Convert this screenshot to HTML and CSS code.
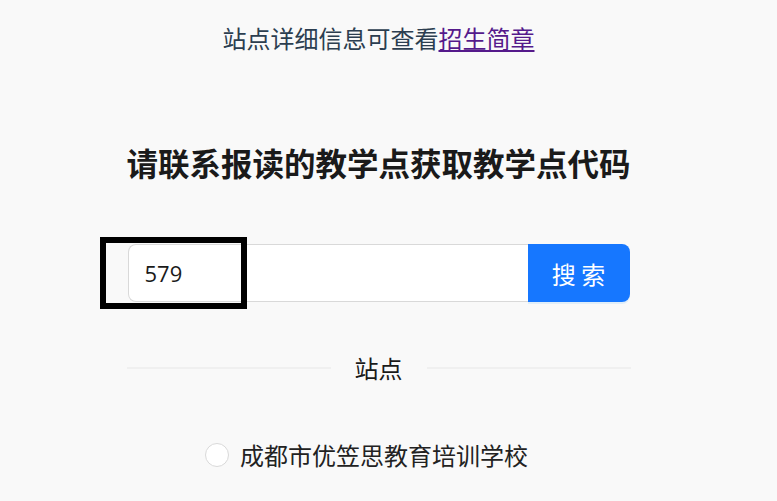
FILE: index.html
```html
<!DOCTYPE html>
<html lang="zh-CN">
<head>
<meta charset="utf-8">
<title>查询教学点</title>
<link rel="stylesheet" href="styles.css">
</head>
<body>
<div class="page">
  <p class="notice">站点详细信息可查看<a class="link" href="#">招生简章</a></p>
  <h1 class="title">请联系报读的教学点获取教学点代码</h1>
  <div class="search">
    <input class="search-input" type="text" value="579">
    <button class="search-btn">搜 索</button>
    <div class="mark"></div>
  </div>
  <div class="divider"><span class="divider-line"></span><span class="divider-text">站点</span><span class="divider-line"></span></div>
  <label class="radio"><span class="radio-circle"></span><span class="radio-text">成都市优笠思教育培训学校</span></label>
</div>
</body>
</html>
```
FILE: styles.css
```css
html, body {
  margin: 0;
  padding: 0;
  background: #f9f9f9;
  font-family: "Noto Sans CJK SC", "Noto Sans", sans-serif;
}
.page {
  width: 757px;
  display: flex;
  flex-direction: column;
  align-items: center;
}
.notice {
  margin: 20px 0 0;
  font-size: 24px;
  line-height: 36px;
  height: 36px;
  color: #2c3e50;
}
.link {
  color: #551a8b;
  text-decoration: underline;
}
.title {
  margin: 82px 0 0;
  font-size: 31.5px;
  line-height: 48px;
  height: 48px;
  font-weight: 700;
  color: #1a1a1a;
}
.search {
  margin-top: 58px;
  width: 502px;
  height: 58px;
  display: flex;
  position: relative;
}
.search-input {
  flex: 1;
  min-width: 0;
  box-sizing: border-box;
  height: 58px;
  border: 1px solid #d9d9d9;
  border-right: none;
  border-radius: 8px 0 0 8px;
  background: #fff;
  padding: 0 0 0 16px;
  font-family: "Open Sans", "Noto Sans", sans-serif;
  font-size: 22px;
  color: #1a1a1a;
  outline: none;
}
.search-btn {
  width: 102px;
  height: 58px;
  border: none;
  border-radius: 0 8px 8px 0;
  background: #1677ff;
  color: #fff;
  font-family: "Noto Sans CJK SC", sans-serif;
  font-size: 24px;
  padding: 0;
  box-shadow: 0 2px 0 rgba(5, 145, 255, 0.1);
}
.mark {
  position: absolute;
  left: -28px;
  top: -7px;
  width: 135px;
  height: 60px;
  border: 6px solid #000;
}
.divider {
  margin-top: 48px;
  width: 504px;
  height: 36px;
  display: flex;
  align-items: center;
}
.divider-line {
  flex: 1;
  height: 0;
  border-top: 2px solid #f0f0f0;
}
.divider-text {
  padding: 0 24px;
  font-size: 24px;
  line-height: 36px;
  color: #1a1a1a;
}
.radio {
  margin: 51px 24px 0 0;
  height: 36px;
  display: flex;
  align-items: center;
  gap: 11px;
}
.radio-circle {
  width: 22px;
  height: 22px;
  border: 1px solid #d9d9d9;
  border-radius: 50%;
  background: #fff;
}
.radio-text {
  font-size: 24px;
  line-height: 36px;
  color: #222;
}
```
